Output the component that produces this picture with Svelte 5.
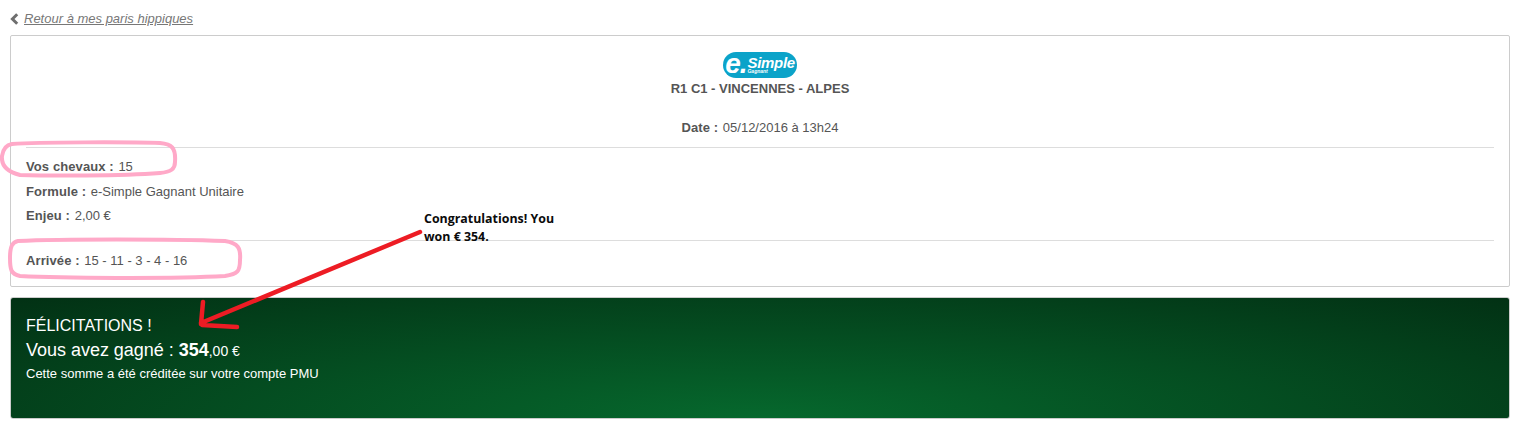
<script lang="ts">
const details = [
    { label: "Vos chevaux", value: "15" },
    { label: "Formule", value: "e-Simple Gagnant Unitaire" },
    { label: "Enjeu", value: "2,00 €" }
];
</script>

<div class="page">
    <a class="back" href="#retour">
        <svg class="chevron" width="9" height="12" viewBox="0 0 9 12" aria-hidden="true">
            <path d="M7.2 1.2 2.4 6 7.2 10.8" fill="none" stroke="#6f6f6f" stroke-width="3" />
        </svg>
        <span>Retour à mes paris hippiques</span>
    </a>

    <section class="card">
        <header class="head">
            <div class="logo">
                <span class="logo-e">e.</span>
                <span class="logo-name">Simple<small>Gagnant</small></span>
            </div>
            <p class="race">R1 C1 - VINCENNES - ALPES</p>
            <p class="date"><b>Date :</b> 05/12/2016 à 13h24</p>
        </header>

        <div class="details">
            {#each details as row}
                <p><b>{row.label} :</b> {row.value}</p>
            {/each}
        </div>

        <div class="arrival">
            <p><b>Arrivée :</b> 15 - 11 - 3 - 4 - 16</p>
        </div>
    </section>

    <section class="win">
        <p class="win-title">FÉLICITATIONS !</p>
        <p class="win-amount">Vous avez gagné : <b>354</b><small>,00 €</small></p>
        <p class="win-note">Cette somme a été créditée sur votre compte PMU</p>
    </section>

    <!-- annotations drawn over the screenshot -->
    <svg class="marks" width="1515" height="423" viewBox="0 0 1515 423" aria-hidden="true">
        <path
            d="M12 144 C40 142 130 142 160 143 C172 144 176 148 175 162 C175 169 171 172 160 173 C120 176 50 176 20 175 C8 172 1 166 2 156 C3 149 6 145 12 144 Z"
            fill="none"
            stroke="#ffa9c8"
            stroke-width="4"
        />
        <path
            d="M18 241 C60 239 170 239 225 241 C238 243 241 248 240 260 C240 271 238 274 225 276 C170 279 60 278 20 276 C11 274 10 270 10 258 C10 247 12 242 18 241 Z"
            fill="none"
            stroke="#ffa9c8"
            stroke-width="4"
        />
        <path
            d="M420 232 201 323 M203 302 201 324 M202 325 237 327"
            fill="none"
            stroke="#ed1c24"
            stroke-width="4.5"
            stroke-linecap="round"
        />
    </svg>
    <p class="note">Congratulations! You<br />won € 354.</p>
</div>

<style>
    :global(body) {
        margin: 0;
        background: #fff;
    }

    .page {
        position: relative;
        width: 1515px;
        height: 423px;
        box-sizing: border-box;
        padding: 11px 5px 0 10px;
        overflow: hidden;
        font-family: "Liberation Sans", Arial, sans-serif;
        font-size: 13px;
        line-height: 15px;
        color: #555;
    }

    p {
        margin: 0;
    }

    .back {
        display: flex;
        align-items: center;
        gap: 5px;
        height: 15px;
        margin-bottom: 9px;
        color: #777;
        font-style: italic;
        text-decoration: underline;
    }

    .chevron {
        flex: none;
    }

    .card {
        box-sizing: border-box;
        height: 252px;
        border: 1px solid #ccc;
        border-radius: 2px;
        padding: 16px 15px 0;
    }

    .card p b {
        margin-right: 1px;
        letter-spacing: 0.1px;
    }

    .head {
        display: flex;
        flex-direction: column;
        align-items: center;
        height: 96px;
        box-sizing: border-box;
        border-bottom: 1px solid #ddd;
    }

    .logo {
        display: flex;
        align-items: center;
        justify-content: center;
        gap: 1px;
        width: 74px;
        height: 26px;
        border-radius: 13px;
        background: #0ba3c9;
        color: #fff;
        font-style: italic;
        font-weight: 700;
    }

    .logo-e {
        font-size: 28px;
        line-height: 26px;
        letter-spacing: -1px;
        margin-top: -3px;
    }

    .logo-name {
        display: flex;
        flex-direction: column;
        font-size: 15px;
        line-height: 13px;
        letter-spacing: -0.3px;
        margin-top: -1px;
    }

    .logo-name small {
        font-size: 5px;
        line-height: 5px;
        letter-spacing: 0;
    }

    .race {
        margin-top: 3px;
        font-weight: 700;
    }

    .date {
        margin-top: 24px;
    }

    .details {
        display: flex;
        flex-direction: column;
        gap: 9.5px;
        height: 93px;
        box-sizing: border-box;
        padding-top: 11px;
        border-bottom: 1px solid #ddd;
    }

    .arrival {
        padding-top: 12px;
    }

    .win {
        box-sizing: border-box;
        height: 122px;
        margin-top: 10px;
        padding: 19px 15px 0;
        border: 1px solid #ccc;
        border-radius: 3px;
        background: radial-gradient(ellipse at 50% 100%, #06682d 0%, #023114 100%);
        color: #fff;
    }

    .win-title {
        font-size: 16px;
        line-height: 18px;
    }

    .win-amount {
        margin-top: 5px;
        font-size: 18px;
        line-height: 20px;
        letter-spacing: -0.02px;
    }

    .win-amount small {
        font-size: 14px;
    }

    .win-note {
        margin-top: 5px;
    }

    .marks {
        position: absolute;
        left: 0;
        top: 0;
        pointer-events: none;
    }

    .note {
        position: absolute;
        left: 424px;
        top: 210px;
        font-family: "Open Sans", sans-serif;
        font-size: 12.4px;
        line-height: 18px;
        font-weight: 700;
        color: #0b0b0b;
    }
</style>
